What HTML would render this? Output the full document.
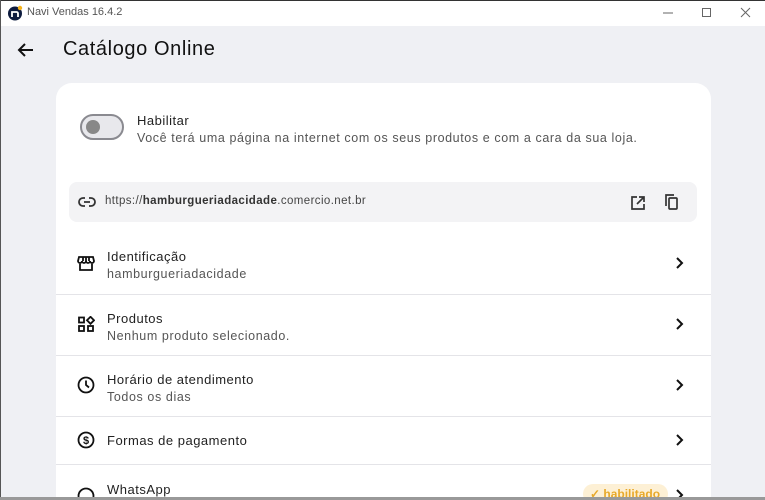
<!DOCTYPE html>
<html><head><meta charset="utf-8"><style>
*{box-sizing:border-box;margin:0;padding:0}
html,body{width:765px;height:500px;overflow:hidden}
body{background:#eff0f4;font-family:"Liberation Sans",sans-serif;position:relative;color:#1a1a1a}
.tb{position:absolute;left:0;top:0;width:765px;height:26px;background:#fff;border-top:1px solid #333}
.lb{position:absolute;left:0;top:0;width:1px;height:500px;background:#555}
.t{position:absolute;white-space:nowrap}
.card{position:absolute;left:56px;top:83px;width:655px;height:417px;background:#fff;border-radius:16px 16px 0 0}
.row{position:absolute;left:56px;width:655px;border-top:1px solid #e4e4e8}
.h{font-size:13px;color:#222;letter-spacing:0.5px}
.s{font-size:12.5px;color:#555;letter-spacing:0.6px}
svg{position:absolute}
</style></head><body>
<div class="tb"></div>
<div class="lb"></div>
<svg style="left:7px;top:5px" width="16" height="16" viewBox="0 0 16 16"><circle cx="8" cy="8.5" r="7" fill="#0d1b3e"/><path d="M5 12V7h4.5a1.5 1.5 0 011.5 1.5V12" stroke="#fff" stroke-width="1.8" fill="none"/><circle cx="13" cy="3" r="2.2" fill="#f5b31c"/></svg>
<div class="t" style="left:27px;top:6px;font-size:11px;color:#555">Navi Vendas 16.4.2</div>
<svg style="left:660px;top:6px" width="95" height="14"><path d="M3 7h10" stroke="#666"/><rect x="42.5" y="2.5" width="8" height="8" fill="none" stroke="#666"/><path d="M81 2l9 9M90 2l-9 9" stroke="#666"/></svg>
<svg style="left:16px;top:41px" width="20" height="18" viewBox="0 0 20 18"><path d="M17 9H3M9 3L3 9l6 6" stroke="#111" stroke-width="2" fill="none"/></svg>
<div class="t" style="left:63px;top:38px;font-size:20px;color:#111;letter-spacing:0.6px">Catálogo Online</div>
<div class="card"></div>
<div style="position:absolute;left:80px;top:114px;width:44px;height:26px;border-radius:13px;background:#e8e8ec;border:2px solid #8a8a90"></div>
<div style="position:absolute;left:86px;top:120px;width:14px;height:14px;border-radius:50%;background:#888"></div>
<div class="t h" style="left:137px;top:113px">Habilitar</div>
<div class="t s" style="left:137px;top:131px">Você terá uma página na internet com os seus produtos e com a cara da sua loja.</div>
<div style="position:absolute;left:69px;top:182px;width:628px;height:40px;background:#f3f3f5;border-radius:8px"></div>
<svg style="left:78px;top:195px" width="18" height="14" viewBox="0 0 18 14"><path d="M7 3H5a4 4 0 000 8h2M11 3h2a4 4 0 010 8h-2M6 7h6" stroke="#333" stroke-width="1.8" fill="none"/></svg>
<div class="t" style="left:105px;top:195px;font-size:11.5px;color:#444;letter-spacing:0.4px">https://<b style="color:#333">hamburgueriadacidade</b>.comercio.net.br</div>
<svg style="left:630px;top:195px" width="16" height="16" viewBox="0 0 16 16"><path d="M7 2H2v12h12V9M9 2h5v5M14 2L7 9" stroke="#333" stroke-width="1.7" fill="none"/></svg>
<svg style="left:663px;top:193px" width="18" height="18" viewBox="0 0 18 18"><path d="M3 13V2h8" stroke="#333" stroke-width="1.7" fill="none"/><rect x="6" y="5" width="8" height="11" stroke="#333" stroke-width="1.7" fill="none" rx="1"/></svg>
<svg style="left:77px;top:255px" width="18" height="17" viewBox="0 0 18 17"><path d="M2 2h14l1 4a2 2 0 01-4 0 2 2 0 01-4 0 2 2 0 01-4 0 2 2 0 01-4 0zM3 8v7h12V8M6 2v4M9 2v4M12 2v4" stroke="#111" stroke-width="1.8" fill="none"/></svg>
<div class="t h" style="left:107px;top:249px">Identificação</div>
<div class="t s" style="left:107px;top:267px">hamburgueriadacidade</div>
<div class="row" style="top:294px"></div>
<svg style="left:78px;top:316px" width="17" height="17" viewBox="0 0 17 17"><g stroke="#111" stroke-width="1.8" fill="none"><rect x="1" y="1.5" width="5" height="5"/><rect x="1" y="10" width="5" height="5"/><rect x="10" y="10" width="5" height="5"/><path d="M12.5 0.8l3.5 3.5-3.5 3.5-3.5-3.5z"/></g></svg>
<div class="t h" style="left:107px;top:311px">Produtos</div>
<div class="t s" style="left:107px;top:329px">Nenhum produto selecionado.</div>
<div class="row" style="top:355px"></div>
<svg style="left:77px;top:376px" width="18" height="18" viewBox="0 0 18 18"><circle cx="9" cy="9" r="7.5" stroke="#111" stroke-width="1.8" fill="none"/><path d="M9 4.5V9l3 2.5" stroke="#111" stroke-width="1.8" fill="none"/></svg>
<div class="t h" style="left:107px;top:372px">Horário de atendimento</div>
<div class="t s" style="left:107px;top:390px">Todos os dias</div>
<div class="row" style="top:416px"></div>
<svg style="left:77px;top:431px" width="18" height="18" viewBox="0 0 18 18"><circle cx="9" cy="9" r="7.5" stroke="#111" stroke-width="1.8" fill="none"/><text x="9" y="13" font-size="11" font-weight="bold" text-anchor="middle" fill="#111" font-family="Liberation Sans">$</text></svg>
<div class="t h" style="left:107px;top:433px">Formas de pagamento</div>
<div class="row" style="top:464px"></div>
<svg style="left:77px;top:487px" width="18" height="18" viewBox="0 0 18 18"><circle cx="9" cy="9" r="7.5" stroke="#111" stroke-width="1.8" fill="none"/></svg>
<div class="t h" style="left:107px;top:482px">WhatsApp</div>
<div style="position:absolute;left:583px;top:484px;width:85px;height:20px;border-radius:10px;background:#fdf0d5"></div>
<div class="t" style="left:590px;top:487px;font-size:12px;color:#e8a92a;font-weight:bold">✓ habilitado</div>
<svg style="left:674px;top:256px" width="12" height="250" viewBox="0 0 12 250"><g stroke="#111" stroke-width="2" fill="none"><path d="M3 2l5 5-5 5"/><path d="M3 63l5 5-5 5"/><path d="M3 124l5 5-5 5"/><path d="M3 179l5 5-5 5"/><path d="M3 234l5 5-5 5"/></g></svg>
<div style="position:absolute;left:0;top:497px;width:765px;height:3px;background:#999"></div>
</body></html>
